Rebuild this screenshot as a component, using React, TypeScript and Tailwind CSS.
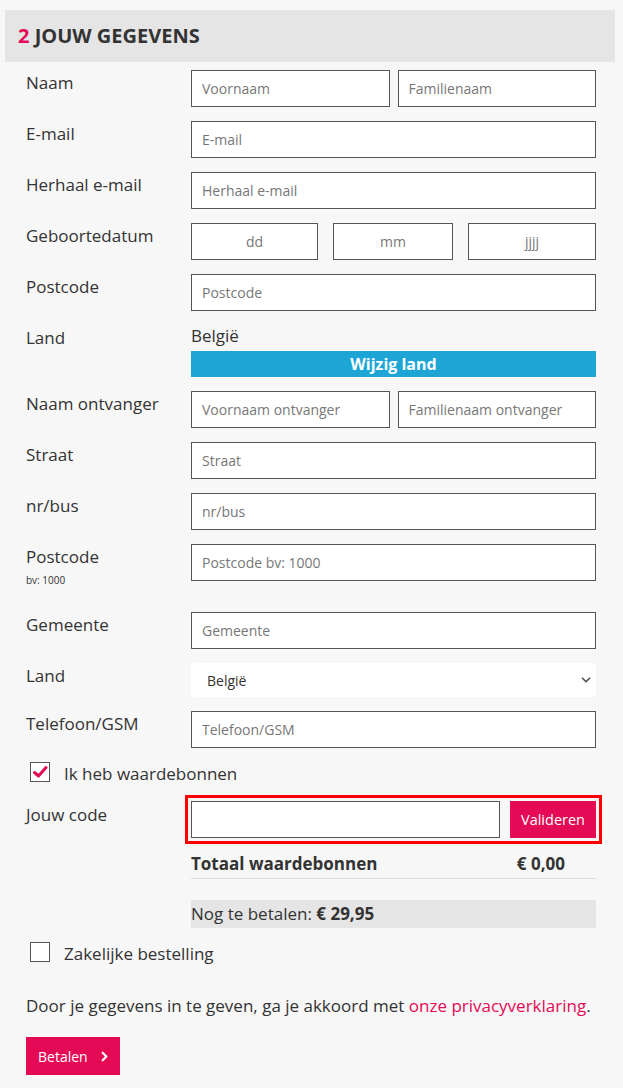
import { ChevronRight, ChevronDown } from 'lucide-react';

const inputCls =
  'h-[37px] w-full border border-[#555] bg-white px-[10px] text-[14px] text-[#333] placeholder:text-[#777] outline-none';

const Row = ({ label, children, hint }: { label: string; children: React.ReactNode; hint?: string }) => (
  <div className="flex">
    <div className="w-[165px] shrink-0">
      <div className="text-[17px] leading-[25px] text-[#333]">{label}</div>
      {hint && <div className="pt-[5px] pb-[12px] text-[10px] leading-[12px] text-[#333]">{hint}</div>}
    </div>
    <div className="flex-1">{children}</div>
  </div>
);

const Checkbox = ({ checked }: { checked?: boolean }) => (
  <span className="ml-[4px] flex h-[20px] w-[20px] shrink-0 items-center justify-center border-[1.5px] border-[#555] bg-white">
    {checked && (
      <svg width="16" height="16" viewBox="0 0 16 16" fill="none">
        <path d="M2.5 8.5 L6.5 12 L14 3.5" stroke="#e50a55" strokeWidth="3" strokeLinecap="round" strokeLinejoin="round" />
      </svg>
    )}
  </span>
);

export default function App() {
  return (
    <div className="min-h-screen bg-[#f7f7f7] pt-[10px] pl-[5px] pr-[8px] font-['Open_Sans',sans-serif] text-[#333]">
      <header className="flex h-[52px] items-center bg-[#e5e5e5] pl-[13px]">
        <h1 className="text-[20px] font-bold uppercase text-[#333]">
          <span className="text-[#e50a55]">2</span> Jouw gegevens
        </h1>
      </header>

      <div className="mt-[8px] flex flex-col gap-[14px] pl-[21px] pr-[19px]">
        <Row label="Naam">
          <div className="grid grid-cols-2 gap-[8px]">
            <input className={inputCls} placeholder="Voornaam" />
            <input className={inputCls} placeholder="Familienaam" />
          </div>
        </Row>
        <Row label="E-mail">
          <input className={inputCls} placeholder="E-mail" />
        </Row>
        <Row label="Herhaal e-mail">
          <input className={inputCls} placeholder="Herhaal e-mail" />
        </Row>
        <Row label="Geboortedatum">
          <div className="grid grid-cols-[127px_120px_1fr] gap-[15px]">
            <input className={`${inputCls} text-center`} placeholder="dd" />
            <input className={`${inputCls} text-center`} placeholder="mm" />
            <input className={`${inputCls} text-center`} placeholder="jjjj" />
          </div>
        </Row>
        <Row label="Postcode">
          <input className={inputCls} placeholder="Postcode" />
        </Row>
        <Row label="Land">
          <div className="mb-[4px] text-[17px] leading-[22px]">België</div>
          <button className="flex h-[26px] w-full items-center justify-center bg-[#1da5d6] text-[16px] font-bold text-white">
            Wijzig land
          </button>
        </Row>
        <Row label="Naam ontvanger">
          <div className="grid grid-cols-2 gap-[8px]">
            <input className={inputCls} placeholder="Voornaam ontvanger" />
            <input className={inputCls} placeholder="Familienaam ontvanger" />
          </div>
        </Row>
        <Row label="Straat">
          <input className={inputCls} placeholder="Straat" />
        </Row>
        <Row label="nr/bus">
          <input className={inputCls} placeholder="nr/bus" />
        </Row>
        <Row label="Postcode" hint="bv: 1000">
          <input className={inputCls} placeholder="Postcode bv: 1000" />
        </Row>
        <Row label="Gemeente">
          <input className={inputCls} placeholder="Gemeente" />
        </Row>
        <Row label="Land">
          <div className="flex h-[34px] items-center justify-between rounded-[4px] bg-white pl-[16px] pr-[3px] text-[14px] text-[#333]">
            <span>België</span>
            <ChevronDown size={14} strokeWidth={3} className="text-[#555]" />
          </div>
        </Row>
        <Row label="Telefoon/GSM">
          <input className={inputCls} placeholder="Telefoon/GSM" />
        </Row>

        <label className="flex h-[20px] items-center gap-[14px]">
          <Checkbox checked />
          <span className="pt-[3px] text-[17px] leading-[25px]">Ik heb waardebonnen</span>
        </label>
      </div>

      <div className="mt-[13px] pl-[21px] pr-[19px]">
        <div className="flex">
          <div className="w-[165px] shrink-0 pt-[7px] text-[17px] leading-[25px]">Jouw code</div>
          <div className="flex-1">
            <div className="-mx-[6px] flex gap-[10px] border-[3px] border-[#ff0000] p-[3px]">
              <input className={`${inputCls} flex-1`} />
              <button className="h-[37px] w-[86px] shrink-0 bg-[#e50a55] text-[14.5px] text-white">Valideren</button>
            </div>
            <div className="mt-[8px] flex justify-between border-b border-[#ddd] pb-[2px] pr-[31px] text-[17px] font-bold leading-[24px]">
              <span>Totaal waardebonnen</span>
              <span>€ 0,00</span>
            </div>
            <div className="mt-[21px] flex h-[28px] items-center bg-[#e5e5e5] text-[17px]">
              Nog te betalen:&nbsp;<span className="font-bold">€ 29,95</span>
            </div>
          </div>
        </div>

        <label className="mt-[14px] flex h-[20px] items-center gap-[14px]">
          <Checkbox />
          <span className="pt-[3px] text-[17px] leading-[25px]">Zakelijke bestelling</span>
        </label>

        <p className="mt-[32px] text-[17px] leading-[24px]">
          Door je gegevens in te geven, ga je akkoord met{' '}
          <a className="text-[#e50a55]">onze privacyverklaring</a>.
        </p>

        <button className="mt-[19px] flex h-[38px] w-[94px] items-center gap-[9px] bg-[#e50a55] pl-[12px] text-[14px] text-white">
          Betalen
          <ChevronRight size={15} strokeWidth={3.5} />
        </button>
      </div>
    </div>
  );
}
